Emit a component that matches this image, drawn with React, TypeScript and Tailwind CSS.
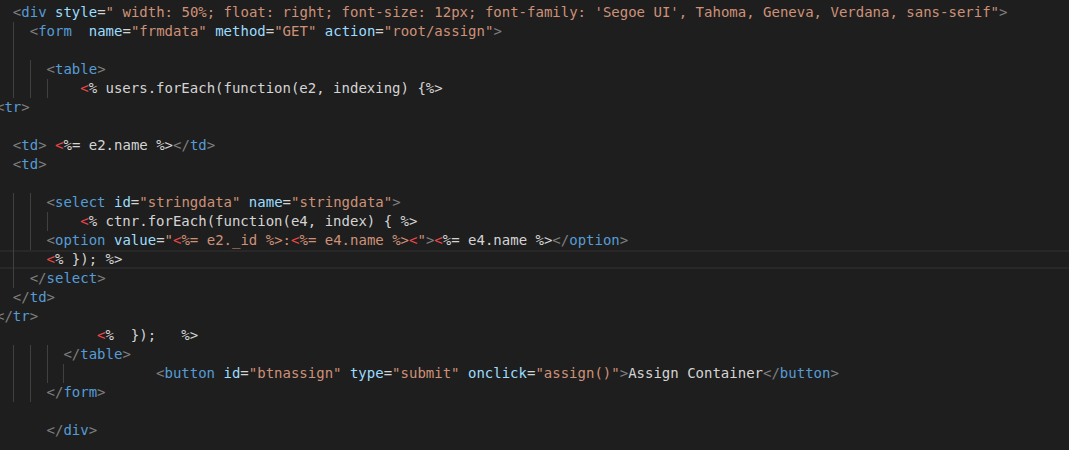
type Tok = [string, string];
type Line = { i: number; g: number[]; t: Tok[]; cur?: boolean };

const P = "text-[#808080]";
const TAG = "text-[#569cd6]";
const AT = "text-[#9cdcfe]";
const STR = "text-[#ce9178]";
const TX = "text-[#d4d4d4]";
const RED = "text-[#f44747]";

const open = (name: string): Tok[] => [["<", P], [name, TAG]];
const close = (name: string): Tok[] => [["</", P], [name, TAG], [">", P]];
const attr = (name: string, val: string): Tok[] => [
  [" " + name, AT],
  ["=", TX],
  ['"' + val + '"', STR],
];

// i = indent (columns), g = indent guides (columns), t = tokens
const lines: Line[] = [
  {
    i: 2,
    g: [],
    t: [
      ...open("div"),
      ...attr(
        "style",
        " width: 50%; float: right; font-size: 12px; font-family: 'Segoe UI', Tahoma, Geneva, Verdana, sans-serif"
      ),
      [">", P],
    ],
  },
  {
    i: 4,
    g: [2],
    t: [...open("form"), [" ", TX], ...attr("name", "frmdata"), ...attr("method", "GET"), ...attr("action", "root/assign"), [">", P]],
  },
  { i: 4, g: [2, 4], t: [] },
  { i: 6, g: [2, 4], t: [...open("table"), [">", P]] },
  { i: 10, g: [2, 4, 6], t: [["<", RED], ["% users.forEach(function(e2, indexing) {%>", TX]] },
  { i: 0, g: [], t: [...open("tr"), [">", P]] },
  { i: 0, g: [], t: [] },
  { i: 2, g: [], t: [...open("td"), [">", P], [" ", TX], ["<", RED], ["%= e2.name %>", TX], ...close("td")] },
  { i: 2, g: [], t: [...open("td"), [">", P]] },
  { i: 2, g: [2], t: [] },
  { i: 6, g: [2, 4], t: [...open("select"), ...attr("id", "stringdata"), ...attr("name", "stringdata"), [">", P]] },
  { i: 10, g: [2, 4, 6], t: [["<", RED], ["% ctnr.forEach(function(e4, index) { %>", TX]] },
  {
    i: 6,
    g: [2, 4],
    t: [
      ...open("option"),
      [" value", AT],
      ["=", TX],
      ['"', STR],
      ["<", RED],
      ["%= e2._id %>:", STR],
      ["<", RED],
      ["%= e4.name %>", STR],
      ["<", RED],
      ['"', STR],
      [">", P],
      ["<", RED],
      ["%= e4.name %>", TX],
      ...close("option"),
    ],
  },
  { i: 6, g: [2], t: [["<", RED], ["% }); %>", TX]], cur: true },
  { i: 4, g: [2], t: close("select") },
  { i: 2, g: [], t: close("td") },
  { i: 0, g: [], t: close("tr") },
  { i: 12, g: [], t: [["<", RED], ["%  });   %>", TX]] },
  { i: 8, g: [2, 4, 6], t: close("table") },
  {
    i: 19,
    g: [2, 4, 6, 8],
    t: [
      ...open("button"),
      ...attr("id", "btnassign"),
      ...attr("type", "submit"),
      ...attr("onclick", "assign()"),
      [">", P],
      ["Assign Container", TX],
      ...close("button"),
    ],
  },
  { i: 6, g: [2, 4], t: close("form") },
  { i: 0, g: [], t: [] },
  { i: 6, g: [], t: close("div") },
];

const CodeLine = ({ line }: { line: Line }) => {
  const indent = [];
  for (let c = 0; c + 2 <= line.i; c += 2) {
    indent.push(
      <span
        key={c}
        className={
          "inline-block w-[2ch] h-[19px] align-top " +
          (line.g.includes(c) ? "shadow-[inset_1px_0_0_#404040]" : "")
        }
      />
    );
  }
  const rest = line.i % 2 === 1 ? " " : "";
  return (
    <div
      className={
        "h-[19px] whitespace-pre " +
        (line.cur ? "border-y-2 border-[#282828] leading-[15px]" : "leading-[19px]")
      }
    >
      <div className={line.cur ? "-mt-[2px] leading-[19px]" : ""}>
        {indent}
        {rest}
        {line.t.map((tk, k) => (
          <span key={k} className={tk[1]}>
            {tk[0]}
          </span>
        ))}
      </div>
    </div>
  );
};

export default function App() {
  return (
    <div className="w-[1069px] h-[450px] bg-[#1e1e1e] overflow-hidden pt-[3px]">
      <div className="ml-[-4px] text-[14px] font-['DejaVu_Sans_Mono',monospace]">
        {lines.map((l, n) => (
          <CodeLine key={n} line={l} />
        ))}
      </div>
    </div>
  );
}
